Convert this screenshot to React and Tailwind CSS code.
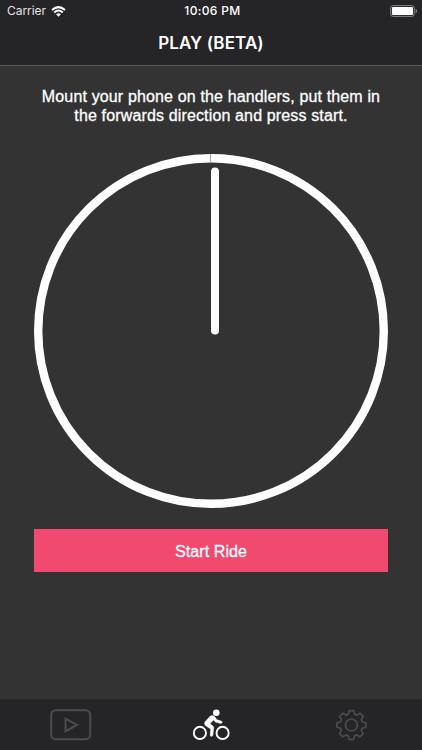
const WifiIcon = () => (
  <svg width="15" height="11" viewBox="0 0 15 11" fill="none" stroke="white">
    <path d="M1 3.9 Q7.5 -1.7 14 3.9" strokeWidth="2" />
    <path d="M3.2 6.5 Q7.5 2.7 11.8 6.5" strokeWidth="1.9" />
    <path d="M5.1 8.2 Q7.5 6.2 9.9 8.2 L7.5 10.7 Z" fill="white" stroke="none" />
  </svg>
);

const BatteryIcon = () => (
  <svg width="28" height="12" viewBox="0 0 28 12">
    <rect x="0.7" y="0.6" width="23.6" height="10.8" rx="2.4" fill="none" stroke="#858586" strokeWidth="1" />
    <rect x="2" y="2" width="21" height="8" rx="1" fill="white" />
    <path d="M25.6 4 Q27.2 4.7 27.2 6 Q27.2 7.3 25.6 8 Z" fill="#858586" />
  </svg>
);

const PlayIcon = () => (
  <svg width="42" height="32" viewBox="0 0 42 32" fill="none" stroke="#4c4c4e" strokeWidth="2">
    <rect x="1.2" y="1.2" width="39" height="29" rx="4.5" />
    <path d="M15.5 9.6 L27 15.9 L15.5 22.3 Z" />
  </svg>
);

const BikeIcon = () => (
  <svg width="38" height="32" viewBox="0 0 38 32" fill="none" stroke="white">
    <circle cx="7.9" cy="23.9" r="6.1" strokeWidth="1.9" />
    <circle cx="30.6" cy="23.9" r="6.1" strokeWidth="1.9" />
    <circle cx="24.3" cy="3.8" r="3.3" fill="white" stroke="none" />
    <path
      d="M18.4 6.9 Q21.2 5.8 22.8 7.8 L25 10.8 L29.2 11.9 Q30.6 12.5 30.2 13.6 Q29.8 14.6 28.6 14.4 L23.5 13.1 L21.4 11 L18 14.8 L20.9 17 Q22 18 21.7 19.4 L20.9 26 Q20.6 27.5 19.3 27.4 Q18 27.1 18.2 25.8 L18.7 20 L13.4 16.6 Q11.6 14.8 13 12.8 Z"
      fill="white"
      strokeWidth="0.4"
      strokeLinejoin="round"
    />
  </svg>
);

const teeth = [0, 45, 90, 135, 180, 225, 270, 315];

// one tooth points up at 0deg, the others are the same points rotated
const gearPath =
  teeth
    .map((deg, i) => {
      const a = (deg * Math.PI) / 180;
      const points = [
        [-3.2, -10.8],
        [-2.3, -14.4],
        [2.3, -14.4],
        [3.2, -10.8],
      ];
      return points
        .map(([x, y], j) => {
          const px = x * Math.cos(a) - y * Math.sin(a);
          const py = x * Math.sin(a) + y * Math.cos(a);
          return `${i + j === 0 ? "M" : "L"}${px.toFixed(2)} ${py.toFixed(2)}`;
        })
        .join(" ");
    })
    .join(" ") + " Z";

const GearIcon = () => (
  <svg width="32" height="32" viewBox="-15.4 -16 32 32" fill="none" stroke="#4c4c4e" strokeWidth="1.7" strokeLinejoin="round">
    <path d={gearPath} />
    <circle r="6" />
  </svg>
);

const Dial = () => (
  <svg width="354" height="356" viewBox="0 0 354 356" fill="none" stroke="white">
    <circle cx="177" cy="178" r="172.8" strokeWidth="8.4" />
    <path d="M176.5 1 V9" stroke="#8a8a8a" strokeWidth="0.8" />
    <path d="M181 18.5 V177.5" strokeWidth="8" strokeLinecap="round" />
  </svg>
);

const App = () => {
  return (
    <div className="flex h-[750px] w-[422px] flex-col overflow-hidden bg-[#333333] text-white">
      <header className="h-[66px] border-b border-[#565657] bg-[#252527]">
        <div className="grid h-[22px] grid-cols-3 items-center pr-1 pl-[7px] font-[Inter,sans-serif]">
          <div className="flex items-center gap-[5px]">
            <span className="text-[12px] leading-[22px] tracking-[-0.05px] text-[#e4e4e5]">Carrier</span>
            <WifiIcon />
          </div>
          <span className="text-center text-[12px] leading-[22px] font-medium tracking-[0.35px] whitespace-nowrap">
            10:06 PM
          </span>
          <div className="flex justify-end">
            <BatteryIcon />
          </div>
        </div>
        <h1 className="text-center font-[Inter,sans-serif] text-[17px] leading-[42px] font-semibold tracking-[0.1px]">
          PLAY (BETA)
        </h1>
      </header>

      <main className="flex flex-1 flex-col items-center px-[34px] pt-[21px] font-['Liberation_Sans',Arial,sans-serif]">
        <p className="text-center text-[16px] leading-[19px] tracking-[0.145px] whitespace-nowrap [-webkit-text-stroke:0.3px_white]">
          Mount your phone on the handlers, put them in
          <br />
          the forwards direction and press start.
        </p>
        <div className="mt-[28px]">
          <Dial />
        </div>
        <button className="mt-[20px] h-[43px] w-full bg-[#f04a70] pt-0.5 text-[16px] tracking-[0.1px] [-webkit-text-stroke:0.3px_white]">
          Start Ride
        </button>
      </main>

      <nav className="grid h-[51px] grid-cols-[141px_140px_141px] items-center justify-items-center border-t border-[#29292b] bg-[#252527]">
        <PlayIcon />
        <BikeIcon />
        <GearIcon />
      </nav>
    </div>
  );
};

export default App;
